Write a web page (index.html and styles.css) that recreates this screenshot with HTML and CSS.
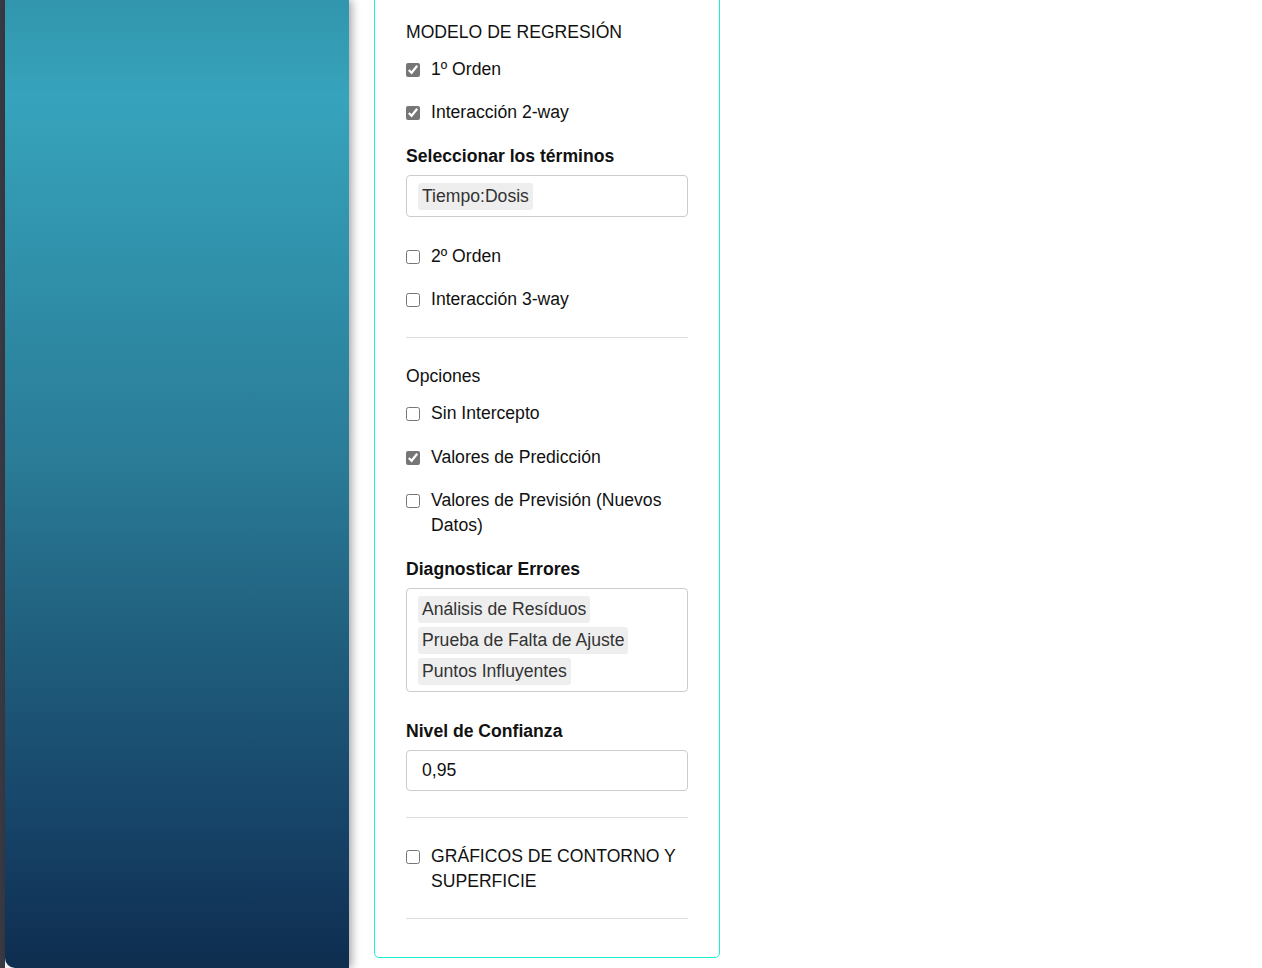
FILE: index.html
```html
<!DOCTYPE html>
<html lang="es">
<head>
<meta charset="utf-8">
<title>Modelo de regresión</title>
<link rel="stylesheet" href="styles.css">
</head>
<body>
<div class="edge"></div>
<aside class="sidebar"></aside>
<main class="main">
  <section class="panel">
    <div class="title">MODELO DE REGRESIÓN</div>
    <label class="check after-title"><input type="checkbox" checked><span>1º Orden</span></label>
    <label class="check"><input type="checkbox" checked><span>Interacción 2-way</span></label>
    <div class="field-label">Seleccionar los términos</div>
    <div class="select-box"><span class="chip">Tiempo:Dosis</span></div>
    <label class="check after-input"><input type="checkbox"><span>2º Orden</span></label>
    <label class="check"><input type="checkbox"><span>Interacción 3-way</span></label>
    <hr class="divider">
    <div class="title after-hr">Opciones</div>
    <label class="check after-title"><input type="checkbox"><span>Sin Intercepto</span></label>
    <label class="check wide"><input type="checkbox" checked><span>Valores de Predicción</span></label>
    <label class="check"><input type="checkbox"><span>Valores de Previsión (Nuevos Datos)</span></label>
    <div class="field-label">Diagnosticar Errores</div>
    <div class="select-box multi">
      <span class="chip">Análisis de Resíduos</span>
      <span class="chip">Prueba de Falta de Ajuste</span>
      <span class="chip">Puntos Influyentes</span>
    </div>
    <div class="field-label after-input">Nivel de Confianza</div>
    <div class="text-input">0,95</div>
    <hr class="divider after-input">
    <label class="check after-hr"><input type="checkbox"><span>GRÁFICOS DE CONTORNO Y SUPERFICIE</span></label>
    <hr class="divider last">
  </section>
</main>
</body>
</html>
```
FILE: styles.css
```css
html, body {
  margin: 0;
  padding: 0;
  height: 968px;
  overflow: hidden;
  background: #ffffff;
}
body {
  display: flex;
  align-items: flex-start;
  font-family: "Liberation Sans", Arial, sans-serif;
  font-size: 17.6px;
  line-height: 25px;
  color: #111;
}
.edge {
  width: 5px;
  height: 968px;
  background: #393a44;
  flex: none;
}
.sidebar {
  width: 344px;
  height: 968px;
  flex: none;
  background: linear-gradient(180deg, #3196ad 0%, #37a3bc 10%, #2f8ea8 30%, #2a7b96 48%, #205f7e 66%, #17456a 84%, #0e2d4f 100%);
  border-bottom-left-radius: 10px;
  box-shadow: 3px 0 9px rgba(0, 0, 0, 0.35);
  position: relative;
  z-index: 1;
}
.main {
  flex: none;
  padding-left: 25px;
}
.panel {
  width: 282px;
  margin-top: -12px;
  padding: 31px 31px 38px 31px;
  border: 1px solid #1cf0d2;
  border-radius: 5px;
  display: flex;
  flex-direction: column;
}
.title {
  margin: 0;
}
.check {
  display: flex;
  align-items: flex-start;
  gap: 11px;
  margin-top: 18px;
  cursor: default;
}
.check.wide {
  margin-top: 19px;
}
.check input {
  width: 14px;
  height: 14px;
  margin: 5.5px 0 0 0;
  flex: none;
  accent-color: #767676;
}
.check.after-title {
  margin-top: 12px;
}
.check.after-input {
  margin-top: 27px;
}
.check.after-hr,
.title.after-hr {
  margin-top: 26px;
}
.field-label {
  font-weight: bold;
  margin-top: 19px;
}
.field-label.after-input {
  margin-top: 27px;
}
.select-box {
  margin-top: 6px;
  height: 42px;
  box-sizing: border-box;
  border: 1px solid #cccccc;
  border-radius: 4px;
  padding: 7px 11px;
  display: flex;
  flex-direction: column;
  align-items: flex-start;
  gap: 4.3px;
}
.select-box.multi {
  height: 104px;
}
.chip {
  background: #eeeeee;
  color: #333;
  border-radius: 3px;
  padding: 0 4px;
  height: 26.7px;
  line-height: 26.7px;
  white-space: nowrap;
}
.text-input {
  margin-top: 6px;
  height: 41px;
  box-sizing: border-box;
  border: 1px solid #cccccc;
  border-radius: 4px;
  padding: 0 15px;
  line-height: 39px;
  color: #111;
}
.divider {
  border: none;
  border-top: 1px solid #dddddd;
  margin: 25px 0 0 0;
  height: 0;
  width: 100%;
}
.divider.after-input {
  margin-top: 26px;
}
.divider.last {
  margin-top: 24px;
}
```
